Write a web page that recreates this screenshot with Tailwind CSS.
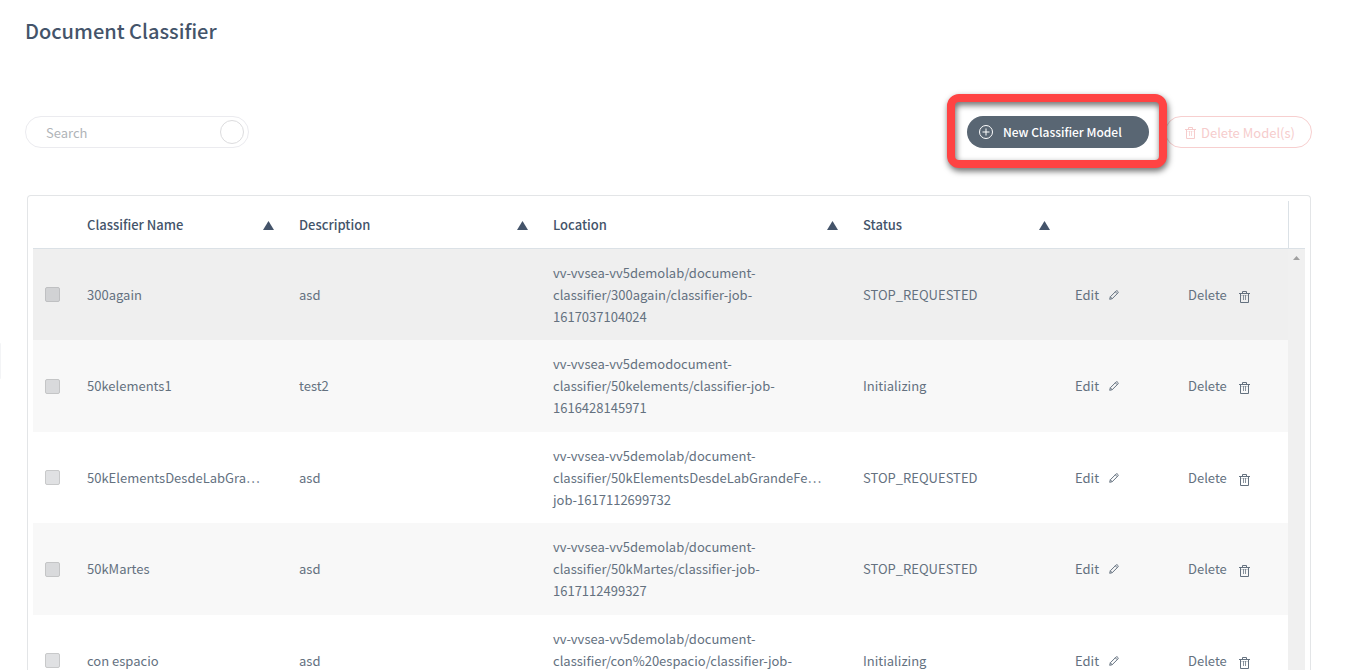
<!DOCTYPE html>
<html lang="en">
<head>
    <meta charset="UTF-8">
    <meta name="viewport" content="width=device-width, initial-scale=1.0">
    <title>Document Classifier</title>
    <script src="https://cdn.jsdelivr.net/npm/@tailwindcss/browser@4"></script>
</head>
<body class="relative flex h-screen flex-col overflow-hidden bg-white pl-[25px] pr-[34px] font-['Noto_Sans_CJK_SC',sans-serif] text-[13px] text-[#64717f]">
    <!-- Shared icons -->
    <svg class="hidden">
        <symbol id="icon-trash" viewBox="0 0 11 12">
            <path d="M0 2.5h11M3.5 2.5V.5h4v2M1.500 3v8.500h8V3" fill="none" stroke="currentColor"/>
            <path d="M4.500 4v5M6.500 4v5" fill="none" stroke="currentColor" stroke-opacity=".75"/>
            <path d="M1 4.500h9" fill="none" stroke="currentColor" stroke-opacity=".3"/>
        </symbol>
        <symbol id="icon-pencil" viewBox="0 0 10 10">
            <path d="M.7 9.300l.6-2.500L7 1.100c.5-.5 1-.5 1.400-.1l.6.6c.4.4.4.900-.1 1.400L3.200 8.700zM6.300 1.800l1.900 1.900M1.300 6.800l1.900 1.900" fill="none" stroke="currentColor"/>
        </symbol>
        <symbol id="icon-sort" viewBox="0 0 11 9">
            <path d="M5.500 0L11 9H0z" fill="currentColor"/>
        </symbol>
    </svg>

    <!-- Collapsed side panel handle -->
    <div class="absolute top-[343px] left-0 h-9 w-px rounded-r bg-gray-100"></div>

    <h1 class="pt-4 text-[20px] leading-[30px] font-medium text-[#44546a]">Document Classifier</h1>

    <!-- Toolbar -->
    <div class="mt-[70px] flex h-8 shrink-0 items-center justify-between">
        <div class="flex h-8 w-[224px] items-center rounded-full border border-[#ebebef] pr-1">
            <input type="text" aria-label="Search" placeholder="Search" class="min-w-0 flex-1 pt-0.5 pl-5 text-[13px] outline-none placeholder:text-[#b0b4b8]">
            <button type="button" aria-label="Run search" class="size-6 rounded-full border border-[#dcdcde]"></button>
        </div>
        <div class="flex items-center gap-4">
            <div class="relative">
                <button type="button" class="flex h-8 w-[182px] items-center gap-[10px] rounded-full bg-[#596673] pl-3 text-[12px] font-medium text-white">
                    <svg class="size-[14px]" viewBox="0 0 14 14" fill="none" stroke="currentColor"><circle cx="7" cy="7" r="6.500"/><path d="M7 3.500v7M3.500 7h7"/></svg>
                    New Classifier Model
                </button>
                <div class="pointer-events-none absolute -top-[22px] -right-[18px] -bottom-5 -left-5 z-10 rounded-xl border-8 border-[#ff4343] drop-shadow-[1px_3px_3px_rgba(0,0,0,0.6)]"></div>
            </div>
            <button type="button" disabled class="flex h-8 w-[147px] items-center gap-[5px] rounded-full border border-[#f7cfcf] pt-0.5 pl-[19px] text-[13px] text-[#f6cccc]">
                <svg class="h-3 w-[11px]"><use href="#icon-trash"/></svg>
                Delete Model(s)
            </button>
        </div>
    </div>

    <!-- Models table -->
    <div class="mt-[47px] mr-px ml-0.5 flex min-h-0 flex-1 overflow-hidden rounded-t border border-b-0 border-[#e3e5e7] px-[5px] pt-[5px]">
        <div class="min-w-0 flex-1 overflow-hidden">
            <table class="w-full table-fixed border-separate border-spacing-0 text-left">
                <colgroup>
                    <col class="w-[42px]">
                    <col class="w-[212px]">
                    <col class="w-[254px]">
                    <col>
                    <col class="w-[212px]">
                    <col class="w-[113px]">
                    <col class="w-[112px]">
                </colgroup>
                <thead class="text-[#44546a]">
                    <tr class="h-12">
                        <th class="border-b border-[#dbe1e6]"></th>
                        <th class="border-b border-[#dbe1e6] pr-[13px] pl-3 font-medium"><div class="flex items-center justify-between">Classifier Name<button type="button" aria-label="Sort by name"><svg class="mt-0.5 h-[9px] w-[11px]"><use href="#icon-sort"/></svg></button></div></th>
                        <th class="border-b border-[#dbe1e6] pr-[13px] pl-3 font-medium"><div class="flex items-center justify-between">Description<button type="button" aria-label="Sort by description"><svg class="mt-0.5 h-[9px] w-[11px]"><use href="#icon-sort"/></svg></button></div></th>
                        <th class="border-b border-[#dbe1e6] pr-[13px] pl-3 font-medium"><div class="flex items-center justify-between">Location<button type="button" aria-label="Sort by location"><svg class="mt-0.5 h-[9px] w-[11px]"><use href="#icon-sort"/></svg></button></div></th>
                        <th class="border-b border-[#dbe1e6] pr-[13px] pl-3 font-medium"><div class="flex items-center justify-between">Status<button type="button" aria-label="Sort by status"><svg class="mt-0.5 h-[9px] w-[11px]"><use href="#icon-sort"/></svg></button></div></th>
                        <th class="border-b border-[#dbe1e6]"></th>
                        <th class="border-b border-[#dbe1e6]"></th>
                    </tr>
                </thead>
                <tbody class="leading-[22px] whitespace-nowrap">
                    <tr class="h-[91px] bg-[#efefef]">
                        <td class="pl-3"><input type="checkbox" disabled aria-label="Select 300again" class="block size-[15px] appearance-none rounded-xs border border-[#bfc0c2] bg-[#d1d2d4]"></td>
                        <td class="px-3">300again</td>
                        <td class="px-3">asd</td>
                        <td class="px-3">vv-vvsea-vv5demolab/document-<br>classifier/300again/classifier-job-<br>1617037104024</td>
                        <td class="px-3">STOP_REQUESTED</td>
                        <td class="px-3"><a href="#" class="flex items-center gap-[10px]">Edit <svg class="size-[10px]"><use href="#icon-pencil"/></svg></a></td>
                        <td class="px-3"><a href="#" class="flex items-center gap-3">Delete <svg class="mt-1 h-3 w-[11px]"><use href="#icon-trash"/></svg></a></td>
                    </tr>
                    <tr class="h-[92px] bg-[#f8f8f8]">
                        <td class="pl-3"><input type="checkbox" disabled aria-label="Select 50kelements1" class="block size-[15px] appearance-none rounded-xs border border-[#c4c5c6] bg-[#d9dadc]"></td>
                        <td class="px-3">50kelements1</td>
                        <td class="px-3">test2</td>
                        <td class="px-3">vv-vvsea-vv5demodocument-<br>classifier/50kelements/classifier-job-<br>1616428145971</td>
                        <td class="px-3">Initializing</td>
                        <td class="px-3"><a href="#" class="flex items-center gap-[10px]">Edit <svg class="size-[10px]"><use href="#icon-pencil"/></svg></a></td>
                        <td class="px-3"><a href="#" class="flex items-center gap-3">Delete <svg class="mt-1 h-3 w-[11px]"><use href="#icon-trash"/></svg></a></td>
                    </tr>
                    <tr class="h-[91px]">
                        <td class="pl-3"><input type="checkbox" disabled aria-label="Select 50kElementsDesdeLabGrande" class="block size-[15px] appearance-none rounded-xs border border-[#c8c9ca] bg-[#e0e1e3]"></td>
                        <td class="px-3">50kElementsDesdeLabGra…</td>
                        <td class="px-3">asd</td>
                        <td class="px-3">vv-vvsea-vv5demolab/document-<br>classifier/50kElementsDesdeLabGrandeFe…<br>job-1617112699732</td>
                        <td class="px-3">STOP_REQUESTED</td>
                        <td class="px-3"><a href="#" class="flex items-center gap-[10px]">Edit <svg class="size-[10px]"><use href="#icon-pencil"/></svg></a></td>
                        <td class="px-3"><a href="#" class="flex items-center gap-3">Delete <svg class="mt-1 h-3 w-[11px]"><use href="#icon-trash"/></svg></a></td>
                    </tr>
                    <tr class="h-[92px] bg-[#f8f8f8]">
                        <td class="pl-3"><input type="checkbox" disabled aria-label="Select 50kMartes" class="block size-[15px] appearance-none rounded-xs border border-[#c4c5c6] bg-[#d9dadc]"></td>
                        <td class="px-3">50kMartes</td>
                        <td class="px-3">asd</td>
                        <td class="px-3">vv-vvsea-vv5demolab/document-<br>classifier/50kMartes/classifier-job-<br>1617112499327</td>
                        <td class="px-3">STOP_REQUESTED</td>
                        <td class="px-3"><a href="#" class="flex items-center gap-[10px]">Edit <svg class="size-[10px]"><use href="#icon-pencil"/></svg></a></td>
                        <td class="px-3"><a href="#" class="flex items-center gap-3">Delete <svg class="mt-1 h-3 w-[11px]"><use href="#icon-trash"/></svg></a></td>
                    </tr>
                    <tr class="h-[91px]">
                        <td class="pl-3"><input type="checkbox" disabled aria-label="Select con espacio" class="block size-[15px] appearance-none rounded-xs border border-[#c8c9ca] bg-[#e0e1e3]"></td>
                        <td class="px-3">con espacio</td>
                        <td class="px-3">asd</td>
                        <td class="px-3">vv-vvsea-vv5demolab/document-<br>classifier/con%20espacio/classifier-job-<br>&nbsp;</td>
                        <td class="px-3">Initializing</td>
                        <td class="px-3"><a href="#" class="flex items-center gap-[10px]">Edit <svg class="size-[10px]"><use href="#icon-pencil"/></svg></a></td>
                        <td class="px-3"><a href="#" class="flex items-center gap-3">Delete <svg class="mt-1 h-3 w-[11px]"><use href="#icon-trash"/></svg></a></td>
                    </tr>
                </tbody>
            </table>
        </div>
        <!-- Scrollbar track -->
        <div class="flex w-[17px] shrink-0 flex-col">
            <div class="h-12 shrink-0 border-b border-l border-[#dbe1e6]"></div>
            <div class="flex flex-1 justify-center bg-[#f0f0f0] pt-[7px]">
                <svg class="h-1 w-[7px]" viewBox="0 0 7 4"><path d="M3.500 0L7 4H0z" fill="#a0a0a0"/></svg>
            </div>
        </div>
    </div>
</body>
</html>
